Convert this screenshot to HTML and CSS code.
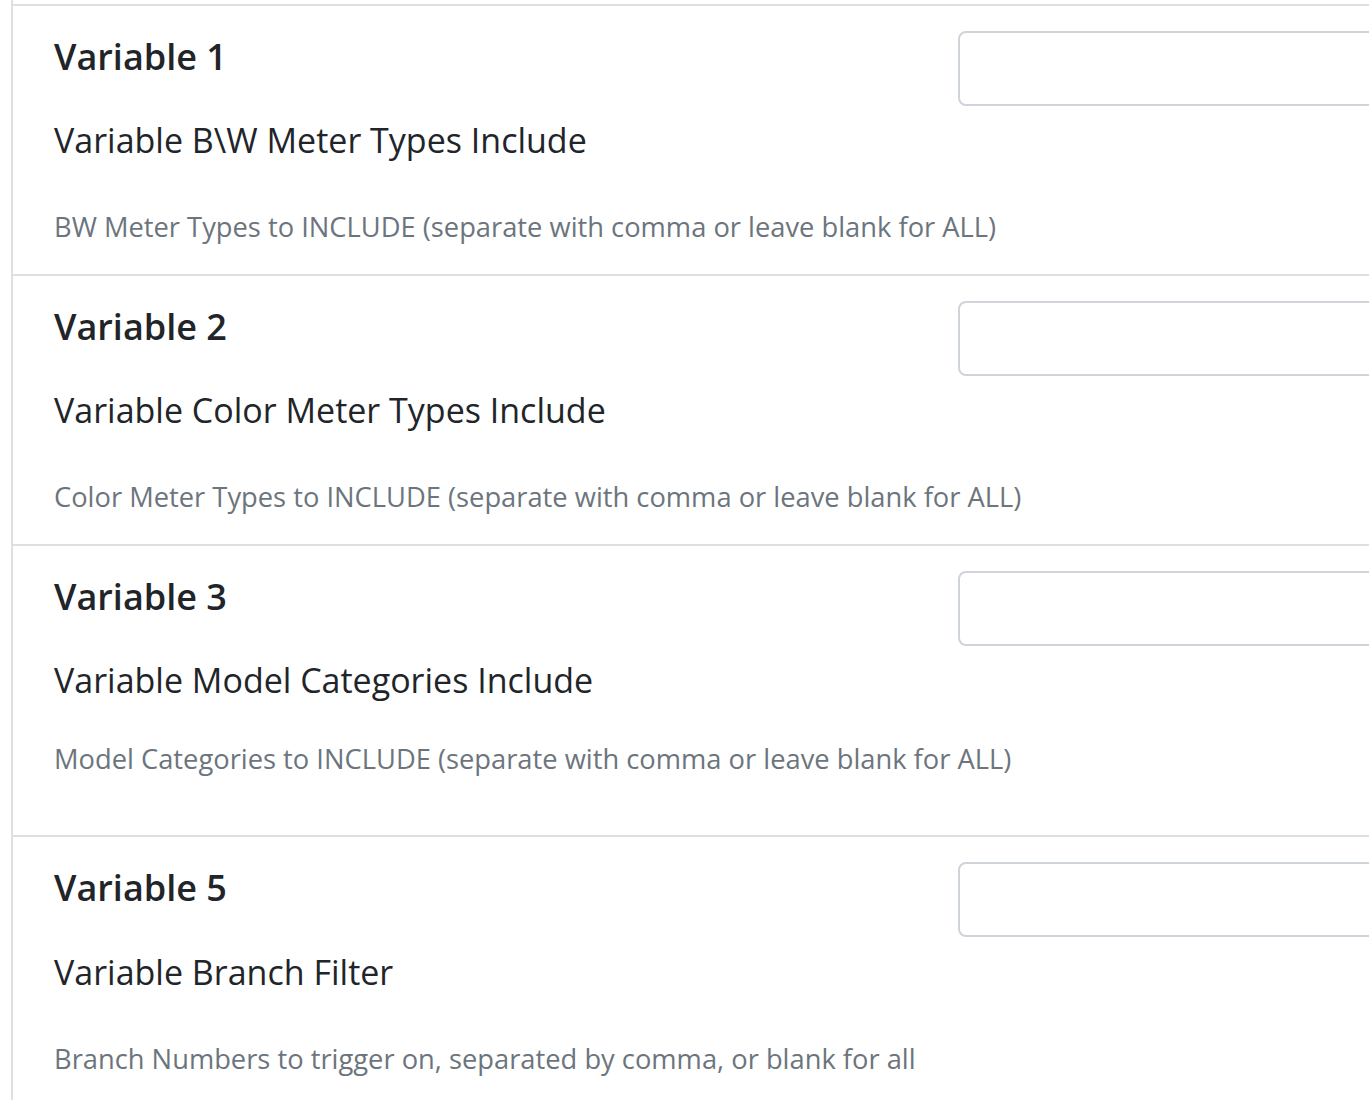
FILE: index.html
```html
<!DOCTYPE html>
<html lang="en">
<head>
<meta charset="utf-8">
<title>Variables</title>
<link rel="stylesheet" href="styles.css">
</head>
<body>
<div class="panel">
  <div class="row">
    <div class="info">
      <h5 class="title">Variable 1</h5>
      <p class="label">Variable B\W Meter Types Include</p>
      <p class="hint">BW Meter Types to INCLUDE (separate with comma or leave blank for ALL)</p>
    </div>
    <div class="field"><input class="control" type="text"></div>
  </div>
  <div class="row">
    <div class="info">
      <h5 class="title">Variable 2</h5>
      <p class="label">Variable Color Meter Types Include</p>
      <p class="hint">Color Meter Types to INCLUDE (separate with comma or leave blank for ALL)</p>
    </div>
    <div class="field"><input class="control" type="text"></div>
  </div>
  <div class="row row-tall">
    <div class="info">
      <h5 class="title">Variable 3</h5>
      <p class="label">Variable Model Categories Include</p>
      <p class="hint">Model Categories to INCLUDE (separate with comma or leave blank for ALL)</p>
    </div>
    <div class="field"><input class="control" type="text"></div>
  </div>
  <div class="row">
    <div class="info">
      <h5 class="title">Variable 5</h5>
      <p class="label">Variable Branch Filter</p>
      <p class="hint">Branch Numbers to trigger on, separated by comma, or blank for all</p>
    </div>
    <div class="field"><input class="control" type="text"></div>
  </div>
</div>
</body>
</html>
```
FILE: styles.css
```css
html, body {
  margin: 0;
  padding: 0;
  background: #fff;
  overflow: hidden;
}

body {
  font-family: "Open Sans", "Noto Sans", sans-serif;
  color: #212529;
}

.panel {
  margin-left: 11px;
  padding-top: 4px;
  border-left: 2px solid #dfdfdf;
  width: 1600px;
}

.row {
  display: flex;
  border-top: 2px solid #dfdfdf;
  padding: 25px 0 26px 41px;
}

.info {
  flex: 0 0 904px;
  min-width: 0;
  white-space: nowrap;
}

.title {
  margin: 4px 0 0;
  font-size: 36px;
  font-weight: 600;
  line-height: 1.2;
}

.label {
  margin: 37px 0 0;
  font-size: 34px;
  line-height: 1.5;
}

.hint {
  margin: 41px 0 0;
  font-size: 27.3px;
  line-height: 1.5;
  color: #6c757d;
}

.row-tall .hint {
  margin-top: 33px;
}

.row-tall {
  padding-bottom: 55px;
}

.field {
  flex: 0 0 auto;
}

.control {
  display: block;
  box-sizing: border-box;
  width: 520px;
  height: 75px;
  margin: 0;
  border: 2px solid #ced4da;
  border-radius: 8px;
  background: #fff;
  font: inherit;
}
```
